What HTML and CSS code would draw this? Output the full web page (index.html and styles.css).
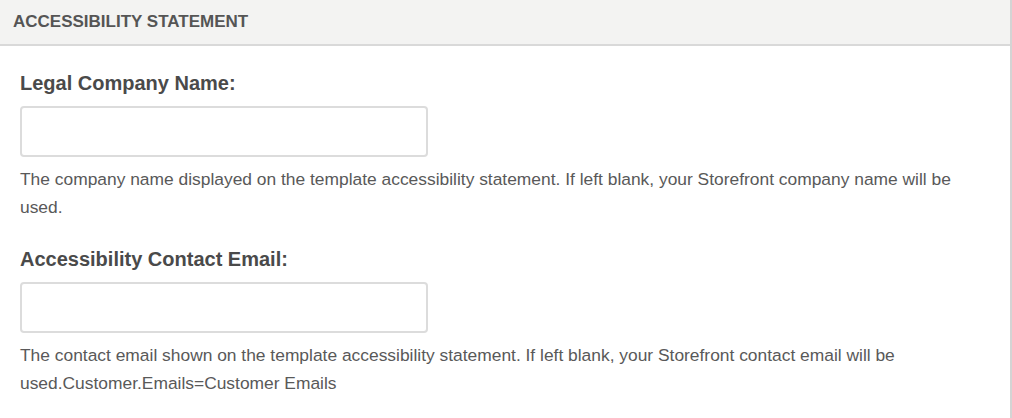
FILE: index.html
```html
<!doctype html>
<html lang="en">
  <head>
    <meta charset="UTF-8" />
    <meta name="viewport" content="width=device-width, initial-scale=1.0" />
    <title>Accessibility Statement</title>
    <link rel="stylesheet" href="styles.css">
  </head>
  <body>
    <div class="panel">
      <div class="panel-heading">ACCESSIBILITY STATEMENT</div>
      <div class="panel-body">
        <div class="field">
          <label for="companyName">Legal Company Name:</label>
          <input type="text" id="companyName" />
          <p class="help">
            The company name displayed on the template accessibility statement. If left blank, your Storefront company name will be used.
          </p>
        </div>
        <div class="field">
          <label for="contactEmail">Accessibility Contact Email:</label>
          <input type="text" id="contactEmail" />
          <p class="help">
            The contact email shown on the template accessibility statement. If left blank, your Storefront contact email will be used.Customer.Emails=Customer Emails
          </p>
        </div>
      </div>
    </div>
  </body>
</html>
```

FILE: styles.css
```css
body {
  margin: 0;
  font-family: "Liberation Sans", Arial, sans-serif;
  color: #555;
  background: #fff;
}
.panel {
  border-right: 2px solid #d4d4d4;
  min-height: 418px;
  box-sizing: border-box;
}
.panel-heading {
  height: 44px;
  line-height: 44px;
  padding-left: 13px;
  background: #f3f3f2;
  border-bottom: 2px solid #d9d9d9;
  font-size: 17px;
  font-weight: bold;
  color: #555;
}
.panel-body {
  padding: 25px 20px 0 20px;
}
.field {
  margin-bottom: 26px;
}
label {
  display: block;
  font-size: 20px;
  line-height: 24px;
  font-weight: bold;
  color: #4a4a4a;
}
input {
  display: block;
  box-sizing: border-box;
  width: 408px;
  height: 51px;
  margin-top: 11px;
  border: 2px solid #dcdcdc;
  border-radius: 4px;
  background: #fff;
}
.help {
  margin: 8px 0 0 0;
  max-width: 950px;
  font-size: 17.4px;
  line-height: 28px;
  color: #595959;
}
```
